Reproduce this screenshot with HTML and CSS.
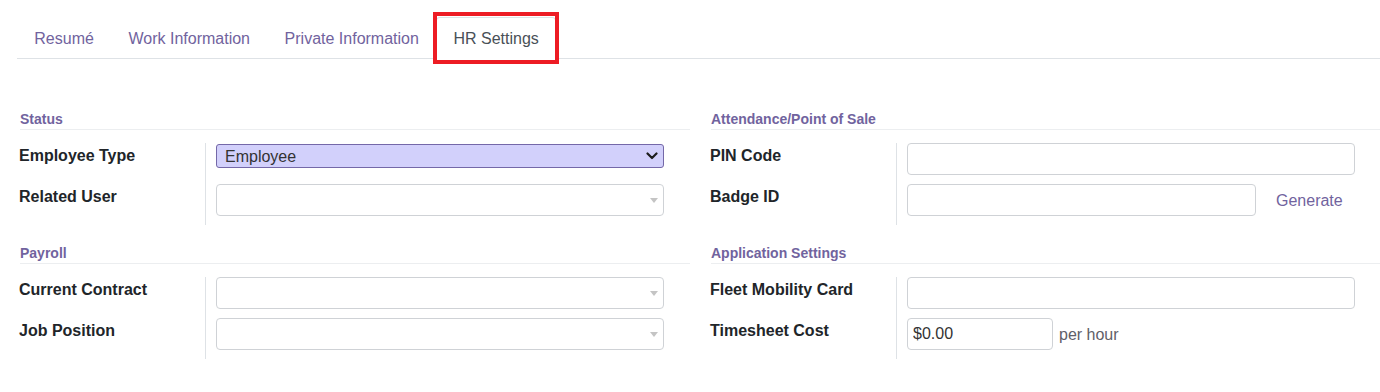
FILE: index.html
```html
<!DOCTYPE html>
<html lang="en">

<head>
  <meta charset="UTF-8">
  <meta name="viewport" content="width=device-width, initial-scale=1.0">
  <title>Employee - HR Settings</title>
  <link rel="stylesheet" href="styles.css">
</head>

<body>
  <main class="sheet">
    <ul class="tabs">
      <li><a class="tab" href="#">Resumé</a></li>
      <li><a class="tab" href="#">Work Information</a></li>
      <li><a class="tab" href="#">Private Information</a></li>
      <li><a class="tab active" href="#">HR Settings</a></li>
    </ul>

    <div class="groups">
      <!-- Status -->
      <section class="group">
        <h3 class="group-title">Status</h3>
        <div class="row">
          <label class="label">Employee Type</label>
          <div class="value">
            <span class="select-wrap">
              <select class="select">
                <option>Employee</option>
              </select>
              <svg class="chevron" width="12" height="8" viewBox="0 0 12 8">
                <path d="M1.5 1.5 L6 6 L10.5 1.5" fill="none" stroke="#1d1d1d"
                  stroke-width="2.2" stroke-linecap="round" stroke-linejoin="round" />
              </svg>
            </span>
          </div>
        </div>
        <div class="row">
          <label class="label">Related User</label>
          <div class="value">
            <span class="many2one">
              <input class="input wide" type="text">
            </span>
          </div>
        </div>
      </section>

      <!-- Attendance -->
      <section class="group">
        <h3 class="group-title">Attendance/Point of Sale</h3>
        <div class="row">
          <label class="label">PIN Code</label>
          <div class="value">
            <input class="input wide" type="text">
          </div>
        </div>
        <div class="row">
          <label class="label">Badge ID</label>
          <div class="value">
            <input class="input badge" type="text">
            <a class="link-btn" href="#">Generate</a>
          </div>
        </div>
      </section>

      <!-- Payroll -->
      <section class="group">
        <h3 class="group-title">Payroll</h3>
        <div class="row">
          <label class="label">Current Contract</label>
          <div class="value">
            <span class="many2one">
              <input class="input wide" type="text">
            </span>
          </div>
        </div>
        <div class="row">
          <label class="label">Job Position</label>
          <div class="value">
            <span class="many2one">
              <input class="input wide" type="text">
            </span>
          </div>
        </div>
      </section>

      <!-- Application settings -->
      <section class="group">
        <h3 class="group-title">Application Settings</h3>
        <div class="row">
          <label class="label">Fleet Mobility Card</label>
          <div class="value">
            <input class="input wide" type="text">
          </div>
        </div>
        <div class="row">
          <label class="label">Timesheet Cost</label>
          <div class="value">
            <input class="input cost" type="text" value="$0.00">
            <span class="unit">per hour</span>
          </div>
        </div>
      </section>
    </div>
  </main>
</body>

</html>
```

FILE: styles.css
```css
*,
*::before,
*::after {
  box-sizing: border-box;
}

:root {
  /* COLORS */
  --purple: #71639e;
  --text: #212529;
  --muted: #5f6068;
  --tab-active: #495057;
  --border: #dee2e6;
  --input-border: #cfd2d6;
  --select-bg: #d2d0fb;
  --select-border: #7468a8;
  --annotation: #ed1c24;

  /* FONTS */
  --ff-sans: "Liberation Sans", Arial, sans-serif;
}

body {
  margin: 0;
  overflow: hidden;
  background-color: #fff;
  font-family: var(--ff-sans);
  color: var(--text);
}

.sheet {
  padding-top: 17px;
  padding-left: 17px;
}

/* TABS */
.tabs {
  display: flex;
  margin: 0;
  padding: 0;
  list-style: none;
  border-bottom: 1px solid var(--border);
}

.tab {
  display: block;
  position: relative;
  margin-bottom: -1px;
  padding: 9px 16.3px 7px;

  border: 1px solid transparent;
  border-radius: 4px 4px 0 0;

  font-size: 16px;
  line-height: 24px;
  color: var(--purple);
  text-decoration: none;
}

.tab.active {
  color: var(--tab-active);
  background-color: #fff;
  border-color: var(--border) var(--border) #fff;
}

/* red box drawn over the active tab */
.tab.active::after {
  content: "";
  position: absolute;
  top: -6px;
  left: -4px;
  right: -4px;
  bottom: -6px;
  border: 4px solid var(--annotation);
}

/* GROUPS */
.groups {
  display: grid;
  grid-template-columns: 691px 691px;
  margin-top: 50px;
  row-gap: 18px;
}

.group {
  padding-right: 18px;
}

.group-title {
  margin: 0 0 13px 3px;
  border-bottom: 1px solid #eceef0;

  font-size: 14px;
  line-height: 20px;
  font-weight: 700;
  color: var(--purple);
}

.row {
  display: grid;
  grid-template-columns: 186px 1fr;
  padding-left: 2px;
}

.label {
  padding-top: 3px;

  font-size: 16px;
  line-height: 20px;
  font-weight: 700;
  color: var(--text);
}

.value {
  display: flex;
  align-items: flex-start;
  min-height: 41px;
  padding-left: 10px;
  padding-bottom: 9px;

  border-left: 1px solid var(--border);
}

/* FIELDS */
.input {
  height: 32px;
  padding: 0 5px;

  border: 1px solid var(--input-border);
  border-radius: 4px;
  background-color: #fff;

  font-family: var(--ff-sans);
  font-size: 16px;
  color: #333;
  outline: none;
}

.wide {
  width: 448px;
}

.badge {
  width: 349px;
}

.cost {
  width: 146px;
}

.many2one {
  position: relative;
  display: block;
}

.many2one::after {
  content: "";
  position: absolute;
  top: 14px;
  right: 6px;
  border-top: 5px solid #c4c4c4;
  border-left: 4px solid transparent;
  border-right: 4px solid transparent;
}

.select-wrap {
  position: relative;
  display: block;
  margin-top: 1px;
}

.select {
  display: block;
  width: 448px;
  height: 24px;
  padding: 0 24px 0 8px;

  border: 1px solid var(--select-border);
  border-radius: 3px;
  background-color: var(--select-bg);
  -webkit-appearance: none;
  appearance: none;

  font-family: var(--ff-sans);
  font-size: 16px;
  color: #333;
}

.chevron {
  position: absolute;
  top: 8px;
  right: 6px;
}

.link-btn {
  margin-left: 20px;
  margin-top: 7px;

  font-size: 16px;
  line-height: 20px;
  color: var(--purple);
  text-decoration: none;
}

.unit {
  margin-left: 6px;
  margin-top: 7px;

  font-size: 16px;
  line-height: 20px;
  color: var(--muted);
}
```
